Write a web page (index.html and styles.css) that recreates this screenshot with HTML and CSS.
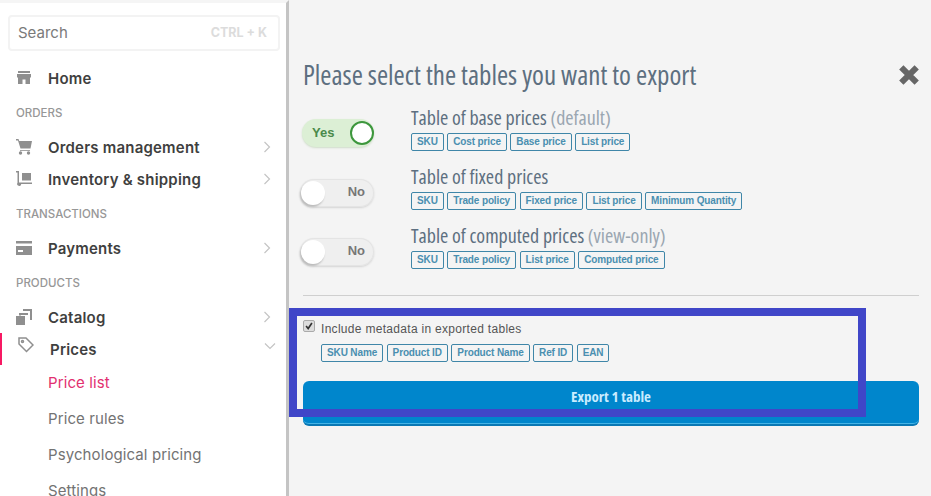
FILE: index.html
```html
<!DOCTYPE html>
<html lang="en">
<head>
<meta charset="utf-8">
<title>Export tables</title>
<link rel="stylesheet" href="styles.css">
</head>
<body>
<aside class="sidebar">
  <div class="search"><span>Search</span><span class="kbd">CTRL + K</span></div>
  <nav class="nav">
    <a class="item"><svg class="ico" viewBox="0 0 16 16"><path d="M2 1h12v2H2zM1 4h14v3.500H14V14H9.500V9.500h-3V14H2V7.500H1z"/></svg><b>Home</b></a>
    <div class="label">ORDERS</div>
    <a class="item"><svg class="ico" viewBox="0 0 16 16"><path d="M0 0h2.500l.7 2H16l-1.500 7.500H4.500L2 1.500H0z"/><circle cx="4.500" cy="14" r="1.700"/><circle cx="12.500" cy="14" r="1.700"/><path d="M4 11h10v.8H4z"/></svg><b>Orders management</b><svg class="chev" viewBox="0 0 8 12"><path d="M1.500 1l5 5-5 5"/></svg></a>
    <a class="item"><svg class="ico" viewBox="0 0 16 16"><path d="M0 0h3v11.500h13V13H5.200a2 2 0 1 1-3.700-1.200V1.500H0z"/><path d="M6 2h9v7.500H6z"/></svg><b>Inventory &amp; shipping</b><svg class="chev" viewBox="0 0 8 12"><path d="M1.500 1l5 5-5 5"/></svg></a>
    <div class="label">TRANSACTIONS</div>
    <a class="item"><svg class="ico" viewBox="0 0 16 16"><path d="M0 1h16v2.500H0zM0 6h16v9H0zM2 10v2h5v-2z" fill-rule="evenodd"/></svg><b>Payments</b><svg class="chev" viewBox="0 0 8 12"><path d="M1.500 1l5 5-5 5"/></svg></a>
    <div class="label">PRODUCTS</div>
    <a class="item"><svg class="ico" viewBox="0 0 16 16"><path d="M0 7h9v9H0zM3 4h9v2H5v.500H3zM7 0h9v11h-2V2H7z"/></svg><b>Catalog</b><svg class="chev" viewBox="0 0 8 12"><path d="M1.500 1l5 5-5 5"/></svg></a>
    <a class="item active"><svg class="ico tag" viewBox="0 0 16 16"><path d="M1 1h7l7 7-6.500 6.500-7.500-7.500z"/><circle cx="4.500" cy="4.500" r="1"/></svg><b>Prices</b><svg class="chev down" viewBox="0 0 12 8"><path d="M1 1.500l5 5 5-5"/></svg></a>
    <a class="sub current">Price list</a>
    <a class="sub">Price rules</a>
    <a class="sub">Psychological pricing</a>
    <a class="sub">Settings</a>
  </nav>
</aside>
<main class="main">
  <header class="head">
    <h1>Please select the tables you want to export</h1>
    <svg class="close" viewBox="0 0 20 20"><path d="M3 3l14 14M17 3L3 17"/></svg>
  </header>
  <section class="row">
    <div class="toggle on"><span class="txt">Yes</span><span class="knob"></span></div>
    <div class="info">
      <h2>Table of base prices <em>(default)</em></h2>
      <div class="tags"><span>SKU</span><span>Cost price</span><span>Base price</span><span>List price</span></div>
    </div>
  </section>
  <section class="row">
    <div class="toggle"><span class="knob"></span><span class="txt">No</span></div>
    <div class="info">
      <h2>Table of fixed prices</h2>
      <div class="tags"><span>SKU</span><span>Trade policy</span><span>Fixed price</span><span>List price</span><span>Minimum Quantity</span></div>
    </div>
  </section>
  <section class="row">
    <div class="toggle"><span class="knob"></span><span class="txt">No</span></div>
    <div class="info">
      <h2>Table of computed prices <em>(view-only)</em></h2>
      <div class="tags"><span>SKU</span><span>Trade policy</span><span>List price</span><span>Computed price</span></div>
    </div>
  </section>
  <hr class="rule">
  <div class="meta">
    <span class="check"><svg viewBox="0 0 12 12"><path d="M2.500 6l2.500 3 4.500-6.500"/></svg></span>
    <span>Include metadata in exported tables</span>
  </div>
  <div class="tags metatags"><span>SKU Name</span><span>Product ID</span><span>Product Name</span><span>Ref ID</span><span>EAN</span></div>
  <button class="export">Export 1 table</button>
  <div class="highlight"></div>
</main>
</body>
</html>
```
FILE: styles.css
```css
* { box-sizing: border-box; }
html, body { margin: 0; height: 100%; }
body {
  display: flex;
  width: 931px;
  height: 496px;
  overflow: hidden;
  background: #f4f4f4;
  font-family: "Liberation Sans", Arial, sans-serif;
}
.sidebar {
  width: 289px;
  flex: none;
  height: 496px;
  overflow: hidden;
  background: #fff;
  border-right: 3px solid #c4c4c4;
  border-top: 3px solid #f5f5f5;
  padding-top: 12px;
  font-family: "Inter", sans-serif;
}
.search {
  display: flex;
  justify-content: space-between;
  align-items: center;
  height: 36px;
  margin: 0 6px 0 8px;
  padding: 0 11px 2px 8px;
  border: 2px solid #f3f3f3;
  border-radius: 4px;
  font-size: 15px;
  color: #7a7a7a;
}
.kbd { font-size: 12.500px; font-weight: 700; color: #dcdcdc; }
.nav { display: flex; flex-direction: column; padding-top: 11px; }
.item {
  display: flex;
  align-items: center;
  height: 32px;
  padding-left: 16px;
  color: #3f3f40;
  position: relative;
  flex: none;
}
.item b { font-size: 15px; font-weight: 600; margin-left: 16px; letter-spacing: .2px; }
.ico { width: 16px; height: 16px; fill: #8f8f8f; flex: none; }
.tag { fill: none; stroke: #8f8f8f; stroke-width: 1.500; margin-top: -8px; margin-left: 2px; }
.chev { width: 8px; height: 12px; margin-left: auto; margin-right: 15px; fill: none; stroke: #c4c4c4; stroke-width: 1.200; }
.chev.down { width: 12px; height: 8px; margin-right: 10px; margin-top: -6px; }
.active { border-left: 2px solid #f71963; padding-left: 14px; }
.active b { margin-left: 16px; }
.label {
  flex: none;
  height: 37px;
  padding-left: 16px;
  display: flex;
  align-items: center;
  font-size: 11.500px;
  font-weight: 500;
  color: #979797;
}
.sub {
  flex: none;
  height: 36px;
  padding-left: 48px;
  display: flex;
  align-items: center;
  font-size: 15px;
  color: #737373;
  letter-spacing: .1px;
}
.current { color: #e2306f; height: 34px; margin-bottom: 1px; }

.main { flex: 1; position: relative; padding: 58px 12px 0 14px; color: #5a6b7b; }
.head { display: flex; justify-content: space-between; align-items: center; height: 34px; margin-bottom: 9px; }
h1 {
  margin: 0;
  font-family: "Open Sans", sans-serif;
  font-stretch: 75%;
  font-weight: 400;
  font-size: 27px;
  color: #5d6f80;
  margin-top: -2px;
}
.close { width: 22px; height: 22px; stroke: #666; stroke-width: 5.500; fill: none; margin-right: -1px; }
.row { display: flex; height: 59px; }
.toggle {
  width: 74px;
  height: 28px;
  margin: 19px 0 0 -3px;
  border-radius: 14px;
  background: #efefef;
  box-shadow: inset 0 0 0 1px #e4e4e4, 0 1px 2px #d4d4d4;
  display: flex;
  align-items: center;
  justify-content: space-between;
  font-weight: 700;
  font-size: 13px;
  color: #777;
  flex: none;
}
.toggle .txt { margin-right: 9px; margin-top: -3px; }
.knob { width: 24px; height: 24px; border-radius: 50%; background: #fff; box-shadow: -1px 2px 2px #bbb; margin-left: 1px; }
.toggle.on { margin-left: -1px; margin-top: 18px; background: #dcefd5; color: #4a8a4a; width: 72px; box-shadow: 0 1px 2px #cfdcc9; }
.toggle.on .txt { margin: -2px 0 0 10px; }
.toggle.on .knob { border: 2px solid #3d973d; margin: 0; box-shadow: none; }
.info { margin-left: 37px; }
h2 {
  margin: 0;
  height: 32px;
  line-height: 33px;
  font-family: "Open Sans", sans-serif;
  font-stretch: 75%;
  font-weight: 400;
  font-size: 20px;
  color: #5d6f80;
  white-space: nowrap;
}
h2 em { font-style: normal; color: #9aa6b1; }
.tags { display: flex; gap: 3.500px; }
.tags span {
  height: 18px;
  padding: 0 5px;
  border: 1px solid #3f86a8;
  border-radius: 2px;
  font-size: 10px;
  font-weight: 700;
  letter-spacing: -.13px;
  line-height: 16px;
  color: #4a8fb0;
  white-space: nowrap;
}
.rule { height: 1px; border: 0; background: #cfcfcf; margin: 17px 0 0; }
.meta { display: flex; align-items: center; gap: 6px; height: 16px; margin-top: 24px; font-size: 12px; color: #555; letter-spacing: .3px; }
.meta span:last-child { margin-top: 1px; }
.check { width: 12px; height: 12px; border: 1px solid #aaa; border-radius: 2px; background: #ddd; display: flex; margin-top: -4px; }
.check svg { width: 10px; height: 10px; fill: none; stroke: #333; stroke-width: 2; }
.metatags { margin: 8px 0 0 18px; }
.export {
  display: block;
  width: 100%;
  height: 45px;
  margin-top: 19px;
  padding: 0 0 13px;
  border: 0;
  border-bottom: 2px solid #0a78b4;
  box-shadow: inset 0 -1px 0 #45b4e6;
  border-radius: 6px;
  background: #0086cc;
  color: #c9ecff;
  font-family: "Open Sans", sans-serif;
  font-stretch: 75%;
  font-weight: 700;
  font-size: 15px;
}
.highlight {
  position: absolute;
  left: 0;
  top: 308px;
  width: 577px;
  height: 109px;
  border: 8px solid #4046c8;
  pointer-events: none;
}
```
